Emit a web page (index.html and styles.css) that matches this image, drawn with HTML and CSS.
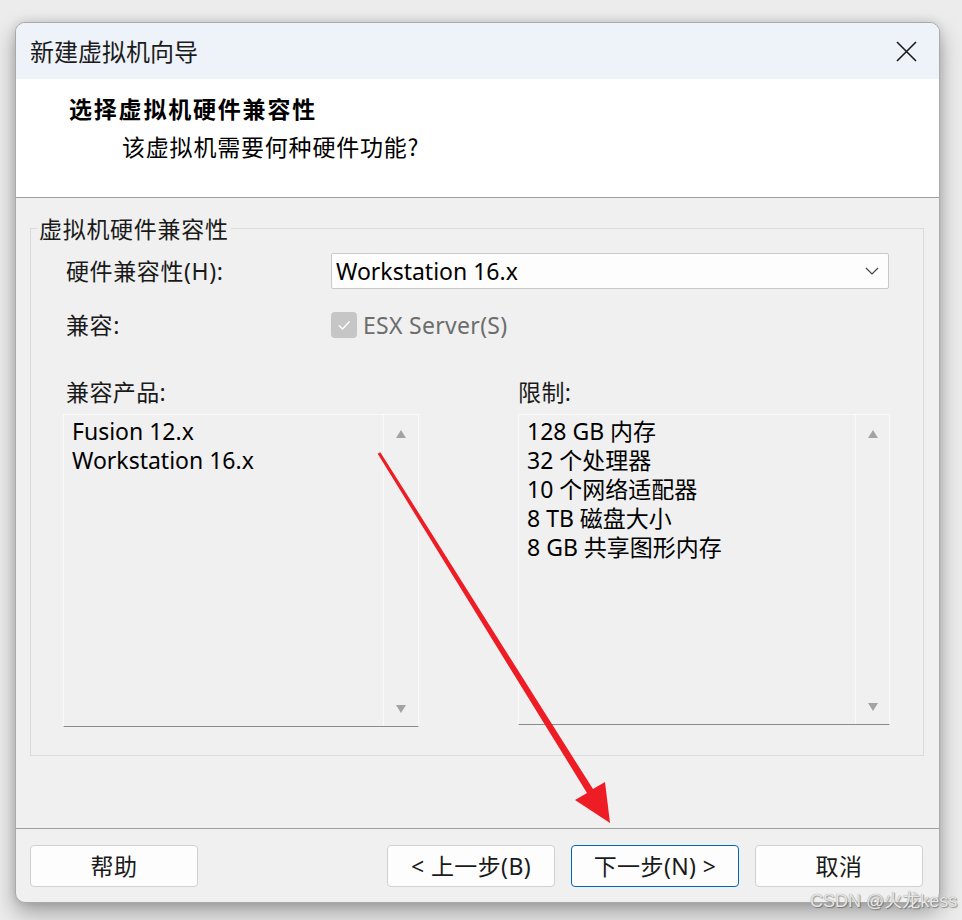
FILE: index.html
```html
<!DOCTYPE html>
<html lang="zh-CN">
<head>
<meta charset="utf-8">
<title>新建虚拟机向导</title>
<link rel="stylesheet" href="styles.css">
</head>
<body>
<div class="window">
  <div class="titlebar">
    <span class="title">新建虚拟机向导</span>
    <svg class="close" width="21" height="21" viewBox="0 0 21 21"><path d="M1 1 L20 20 M20 1 L1 20" stroke="#1a1a1a" stroke-width="1.6" fill="none"/></svg>
  </div>
  <div class="header">
    <div class="h-title">选择虚拟机硬件兼容性</div>
    <div class="h-sub">该虚拟机需要何种硬件功能?</div>
  </div>
  <div class="content">
    <fieldset class="group">
      <legend>虚拟机硬件兼容性</legend>
      <div class="row row-hw">
        <span class="label">硬件兼容性(H):</span>
        <div class="select">
          <span class="select-text">Workstation 16.x</span>
          <svg class="chevron" width="14" height="8" viewBox="0 0 14 8"><path d="M1 1 L7 7 L13 1" stroke="#444" stroke-width="1.2" fill="none"/></svg>
        </div>
      </div>
      <div class="row row-compat">
        <span class="label">兼容:</span>
        <span class="checkbox"><svg width="26" height="26" viewBox="0 0 26 26"><path d="M8 13.5 L11.5 17 L18.5 9.5" stroke="#fff" stroke-width="1.4" fill="none"/></svg></span>
        <span class="check-label">ESX Server(S)</span>
      </div>
      <div class="lists">
        <div class="col col-left">
          <div class="col-label">兼容产品:</div>
          <div class="listbox listbox-left">
            <div class="items">
              <div>Fusion 12.x</div>
              <div>Workstation 16.x</div>
            </div>
            <div class="scroll"><span class="tri-up"></span><span class="tri-down"></span></div>
          </div>
        </div>
        <div class="col col-right">
          <div class="col-label col-label-right">限制:</div>
          <div class="listbox listbox-right">
            <div class="items">
              <div>128 GB 内存</div>
              <div>32 个处理器</div>
              <div>10 个网络适配器</div>
              <div>8 TB 磁盘大小</div>
              <div>8 GB 共享图形内存</div>
            </div>
            <div class="scroll"><span class="tri-up"></span><span class="tri-down"></span></div>
          </div>
        </div>
      </div>
    </fieldset>
  </div>
  <div class="footer">
    <button class="btn">帮助</button>
    <div class="spacer"></div>
    <button class="btn">&lt; 上一步(B)</button>
    <button class="btn btn-primary">下一步(N) &gt;</button>
    <button class="btn">取消</button>
  </div>
</div>
<svg class="arrow" width="962" height="920" viewBox="0 0 962 920">
  <polygon points="377.7,453.8 380.3,452.2 593,789.1 605,782 610,823 575,800 587,792.9" fill="#ee1c25"/>
</svg>
<div class="watermark">CSDN @火龙kess</div>
</body>
</html>
```

FILE: styles.css
```css
* { box-sizing: border-box; }

html, body {
  margin: 0;
  padding: 0;
}

body {
  position: relative;
  width: 962px;
  height: 920px;
  overflow: hidden;
  background: #ececec;
  font-family: "Noto Sans", "Noto Sans CJK SC", sans-serif;
  font-size: 23px;
  color: #000;
  padding: 22px 0 0 15px;
}

.window {
  width: 925px;
  height: 881px;
  border: 1px solid #a9a9a9;
  border-radius: 10px;
  overflow: hidden;
  background: #f0f0f0;
  display: flex;
  flex-direction: column;
  box-shadow: 0 10px 22px rgba(0, 0, 0, 0.32), 0 0 10px rgba(0, 0, 0, 0.12);
}

.titlebar {
  height: 56px;
  flex: none;
  background: #eef2f9;
  display: flex;
  align-items: center;
  justify-content: space-between;
  padding: 0 22px 0 14px;
}

.title {
  font-family: "Noto Sans CJK SC", sans-serif;
  font-size: 24px;
  color: #1b1b1b;
  line-height: 30px;
}

.close { display: block; }

.header {
  height: 119px;
  flex: none;
  background: #fff;
  border-bottom: 1px solid #a0a0a0;
  padding: 12px 0 0 53px;
}

.h-title {
  font-family: "Noto Sans CJK SC", sans-serif;
  font-weight: 700;
  font-size: 23px;
  letter-spacing: 1.8px;
  line-height: 34px;
  color: #000;
}

.h-sub {
  font-family: "Noto Sans CJK SC", sans-serif;
  font-size: 23px;
  letter-spacing: 0.8px;
  line-height: 34px;
  margin-top: 4px;
  padding-left: 53px;
  color: #000;
}

.content {
  height: 631px;
  flex: none;
  border-bottom: 1px solid #a0a0a0;
  padding-top: 15px;
}

.group {
  margin: 0 15px 0 14px;
  padding: 10px 0 28px 0;
  border: 1px solid #dadada;
  min-width: 0;
}

.group legend {
  margin-left: 6px;
  padding: 0 2px;
  line-height: 30px;
  letter-spacing: 0.7px;
  font-family: "Noto Sans CJK SC", sans-serif;
  color: #1a1a1a;
}

.row {
  display: flex;
  align-items: center;
  padding-left: 35px;
}

.label {
  width: 265px;
  flex: none;
  color: #1a1a1a;
  line-height: 30px;
  letter-spacing: 0.6px;
}

.row-hw { height: 36px; }

.select {
  width: 558px;
  height: 36px;
  background: #fdfdfd;
  border: 1px solid #c9c9c9;
  border-radius: 2px;
  display: flex;
  align-items: center;
  justify-content: space-between;
  padding: 0 9px 0 4px;
}

.select-text { line-height: 30px; }

.chevron { display: block; }

.row-compat {
  margin-top: 23px;
  height: 26px;
}

.checkbox {
  width: 26px;
  height: 26px;
  flex: none;
  border-radius: 4px;
  background: #c6c6c6;
  display: block;
}

.checkbox svg { display: block; }

.check-label {
  margin-left: 6px;
  color: #6d6d6d;
  line-height: 30px;
  letter-spacing: 0.3px;
}

.lists {
  display: flex;
  align-items: flex-start;
  margin-top: 40px;
  padding-left: 32px;
}

.col-left { width: 356px; }

.col-right {
  width: 372px;
  margin-left: 99px;
}

.col-label {
  line-height: 28px;
  margin-bottom: 8px;
  padding-left: 3px;
  color: #1a1a1a;
  letter-spacing: 0.4px;
}

.col-label-right { padding-left: 0; }

.listbox {
  display: flex;
  background: #f0f0f0;
  border: 1px solid #fafafa;
  border-bottom-color: #8c8c8c;
}

.listbox-left { height: 313px; }
.listbox-right { height: 311px; }

.items {
  flex: 1;
  padding: 2px 0 0 8px;
  line-height: 29px;
  border-right: 1px solid #fafafa;
}

.scroll {
  width: 34px;
  flex: none;
  display: flex;
  flex-direction: column;
  justify-content: space-between;
  align-items: center;
  padding: 15px 0 13px;
}

.listbox-right .scroll { width: 33px; }

.tri-up {
  width: 0;
  height: 0;
  border-left: 5.5px solid transparent;
  border-right: 5.5px solid transparent;
  border-bottom: 8px solid #a3a3a3;
}

.tri-down {
  width: 0;
  height: 0;
  border-left: 5.5px solid transparent;
  border-right: 5.5px solid transparent;
  border-top: 8px solid #a3a3a3;
}

.footer {
  flex: 1;
  display: flex;
  align-items: flex-start;
  padding: 16px 16px 0 14px;
  gap: 16px;
}

.spacer { flex: 1; }

.btn {
  width: 168px;
  height: 42px;
  flex: none;
  border: 1px solid #d0d0d0;
  border-radius: 4px;
  background: #fdfdfd;
  font-family: "Noto Sans", "Noto Sans CJK SC", sans-serif;
  font-size: 23px;
  color: #1a1a1a;
  padding: 0;
  line-height: 30px;
  letter-spacing: 0.4px;
}

.btn-primary { border-color: #0067c0; }

.arrow {
  position: absolute;
  left: 0;
  top: 0;
  pointer-events: none;
}

.watermark {
  position: absolute;
  left: 810px;
  top: 890px;
  font-family: "Liberation Sans", "Noto Sans CJK SC", sans-serif;
  font-size: 18px;
  line-height: 22px;
  color: #e6e6e6;
  text-shadow: 0 0 1px #8a8a8a, 1px 1px 1px rgba(0, 0, 0, 0.35);
  white-space: nowrap;
}
```
